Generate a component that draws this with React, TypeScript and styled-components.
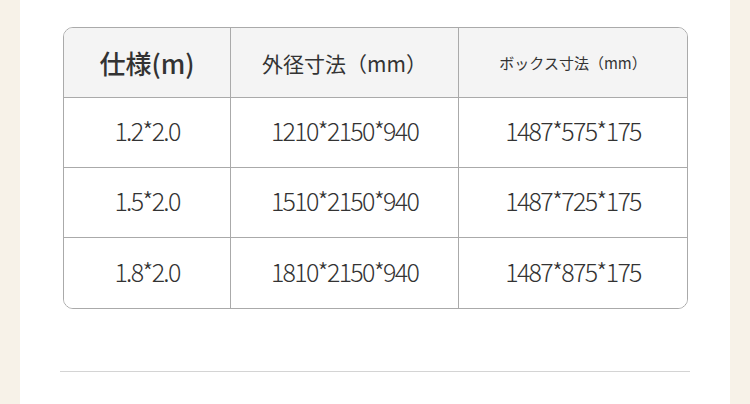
import styled, { createGlobalStyle } from "styled-components";

const specRows = [
  { size: "1.2*2.0", outer: "1210*2150*940", box: "1487*575*175" },
  { size: "1.5*2.0", outer: "1510*2150*940", box: "1487*725*175" },
  { size: "1.8*2.0", outer: "1810*2150*940", box: "1487*875*175" }
];

const GlobalStyle = createGlobalStyle`
  html, body {
    margin: 0;
    padding: 0;
    background: #f7f2e8;
  }

  body {
    font-family: "Noto Sans CJK JP", "Noto Sans", sans-serif;
    color: #333333;
  }
`;

const Page = styled.main`
  width: 710px;
  height: 404px;
  margin: 0 auto;
  background: #ffffff;
  padding-top: 27px;
  box-sizing: border-box;
  display: flex;
  flex-direction: column;
  align-items: center;
`;

const Table = styled.div`
  width: 625px;
  margin-left: 1px;
  display: grid;
  grid-template-columns: 167px 228px 1fr;
  grid-auto-rows: 70px;
  border: 1px solid #aaaaaa;
  border-radius: 10px;
  overflow: hidden;
  box-sizing: border-box;
`;

const Cell = styled.div<{ $head?: boolean; $last?: boolean; $bottom?: boolean }>`
  display: flex;
  align-items: center;
  justify-content: center;
  padding-bottom: ${({ $head }) => ($head ? "0" : "5px")};
  box-sizing: border-box;
  background: ${({ $head }) => ($head ? "#f4f4f4" : "#ffffff")};
  border-right: ${({ $last }) => ($last ? "0" : "1px solid #aaaaaa")};
  border-bottom: ${({ $bottom }) => ($bottom ? "0" : "1px solid #aaaaaa")};
  font-size: 25px;
  font-weight: 300;
  letter-spacing: -1.7px;
  color: #333333;
`;

const HeadText = styled.span<{ $size: number; $weight?: number }>`
  font-size: ${({ $size }) => $size}px;
  font-weight: ${({ $weight }) => $weight ?? 500};
  letter-spacing: 0;
  color: #333333;
`;

const Divider = styled.hr`
  width: 630px;
  margin: 62px 0 0;
  border: 0;
  border-top: 1px solid #d4d4d4;
`;

export default function App() {
  return (
    <>
      <GlobalStyle />
      <Page>
        <Table>
          <Cell $head>
            <HeadText $size={26}>仕様(m)</HeadText>
          </Cell>
          <Cell $head>
            <HeadText $size={21} $weight={400}>外径寸法（mm）</HeadText>
          </Cell>
          <Cell $head $last>
            <HeadText $size={15} $weight={400}>ボックス寸法（mm）</HeadText>
          </Cell>
          {specRows.map((row, i) => {
            const bottom = i === specRows.length - 1;
            return [
              <Cell key={`${row.size}-a`} $bottom={bottom}>
                {row.size}
              </Cell>,
              <Cell key={`${row.size}-b`} $bottom={bottom}>
                {row.outer}
              </Cell>,
              <Cell key={`${row.size}-c`} $bottom={bottom} $last>
                {row.box}
              </Cell>
            ];
          })}
        </Table>
        <Divider />
      </Page>
    </>
  );
}
